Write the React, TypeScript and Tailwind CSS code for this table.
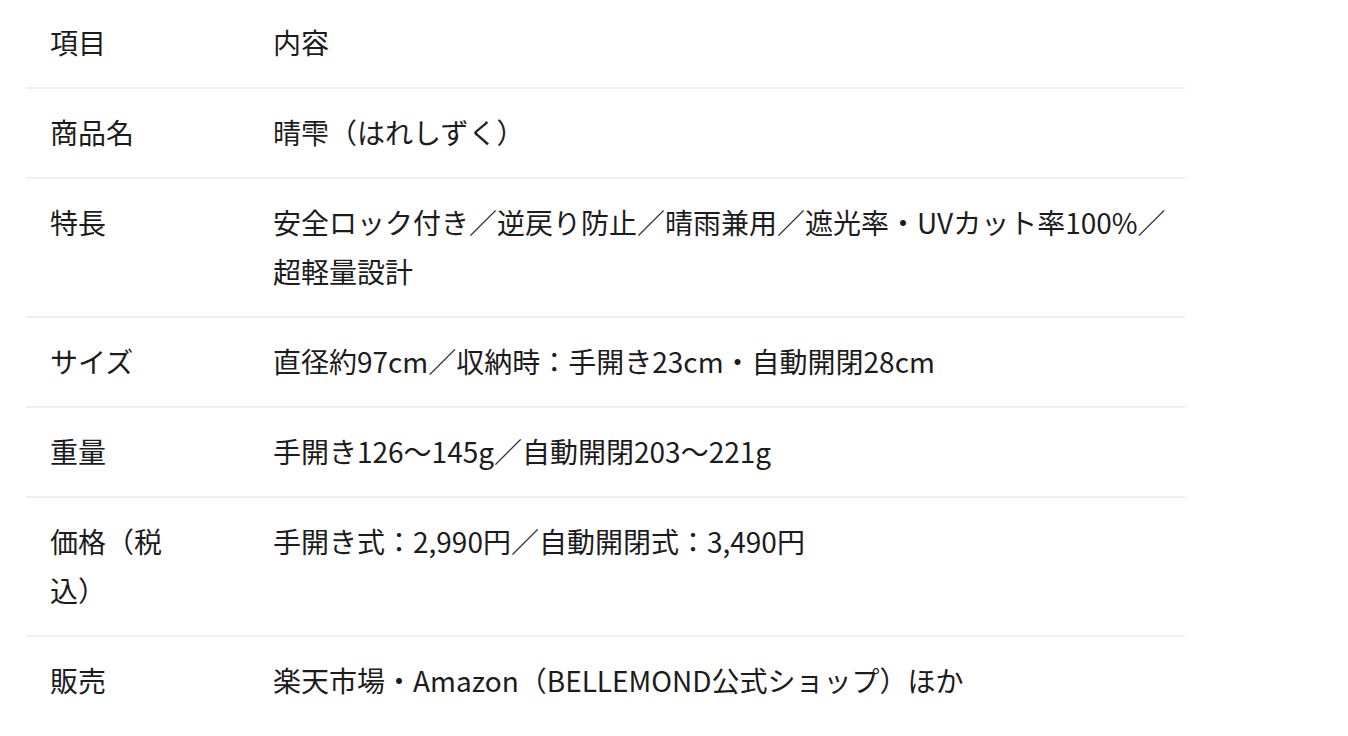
const rows: { label: React.ReactNode; value: React.ReactNode }[] = [
  { label: "商品名", value: "晴雫（はれしずく）" },
  {
    label: "特長",
    value: (
      <>
        安全ロック付き／逆戻り防止／晴雨兼用／遮光率・UVカット率100%／
        <br />
        超軽量設計
      </>
    ),
  },
  { label: "サイズ", value: "直径約97cm／収納時：手開き23cm・自動開閉28cm" },
  { label: "重量", value: "手開き126〜145g／自動開閉203〜221g" },
  {
    label: (
      <>
        価格（税
        <br />
        込）
      </>
    ),
    value: "手開き式：2,990円／自動開閉式：3,490円",
  },
  { label: "販売", value: "楽天市場・Amazon（BELLEMOND公式ショップ）ほか" },
];

export default function App() {
  return (
    <div className="min-h-screen bg-white pl-[26px] pr-[163px] font-['Noto_Sans_CJK_JP','Noto_Sans',sans-serif] text-[28px] leading-[49px] text-[#1c1c1c]">
      <table className="w-[1159px] table-fixed border-collapse">
        <colgroup>
          <col className="w-[223px]" />
          <col />
        </colgroup>
        <thead>
          <tr className="border-b-2 border-[#efefef]">
            <th className="px-6 pt-[18px] pb-[20px] text-left align-top font-normal">項目</th>
            <th className="px-6 pt-[18px] pb-[20px] text-left align-top font-normal">内容</th>
          </tr>
        </thead>
        <tbody>
          {rows.map((r, i) => (
            <tr
              key={i}
              className={i < rows.length - 1 ? "border-b-2 border-[#efefef]" : ""}
            >
              <td className="pt-[19px] pb-[20px] pl-6 pr-6 align-top whitespace-nowrap">{r.label}</td>
              <td className="pt-[19px] pb-[20px] pl-6 pr-2 align-top whitespace-nowrap">{r.value}</td>
            </tr>
          ))}
        </tbody>
      </table>
    </div>
  );
}
